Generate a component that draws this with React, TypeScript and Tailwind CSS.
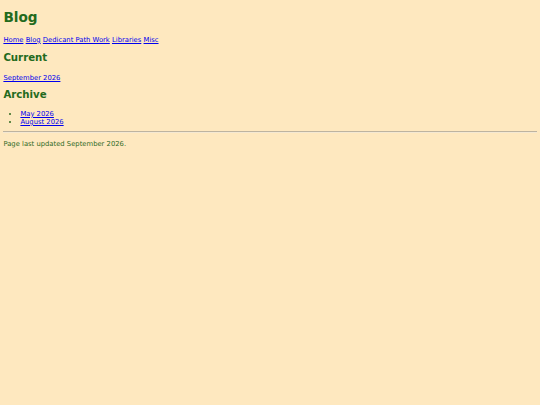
const link = "text-[#0000ee] underline";

export default function App() {
  return (
    <div className="flow-root min-h-[405px] bg-[#fee8bf] px-[3.4px] font-['DejaVu_Sans',sans-serif] text-[6.8px] leading-[normal] text-[#2f6a1f]">
      <h1 className="mt-[9.1px] mb-[10.8px] text-[13.6px] leading-[normal] font-bold text-[#236a1c]">Blog</h1>
      <p className="my-[6.8px]">
        <a href="#" className={link}>Home</a>{" "}
        <a href="#" className={link}>Blog</a>{" "}
        <a href="#" className={link}>Dedicant Path Work</a>{" "}
        <a href="#" className={link}>Libraries</a>{" "}
        <a href="#" className={link}>Misc</a>
      </p>
      <h2 className="mt-[8.5px] mb-[11px] text-[10.2px] leading-[normal] font-bold text-[#236a1c]">Current</h2>
      <p className="my-[6.8px]">
        <a href="#" className={link}>September 2026</a>
      </p>
      <h2 className="mt-[6.8px] mb-[9.7px] text-[10.2px] leading-[normal] font-bold text-[#236a1c]">Archive</h2>
      <ul className="mt-[6.8px] mb-[5.6px] list-disc pl-[17px]">
        <li><a href="#" className={link}>May 2026</a></li>
        <li><a href="#" className={link}>August 2026</a></li>
      </ul>
      <hr className="my-[3.4px] h-[2px] border-t border-b border-t-[#bdb3a0] border-b-[#f4e8d2]" />
      <p className="my-[6.8px]">Page last updated September 2026.</p>
    </div>
  );
}
